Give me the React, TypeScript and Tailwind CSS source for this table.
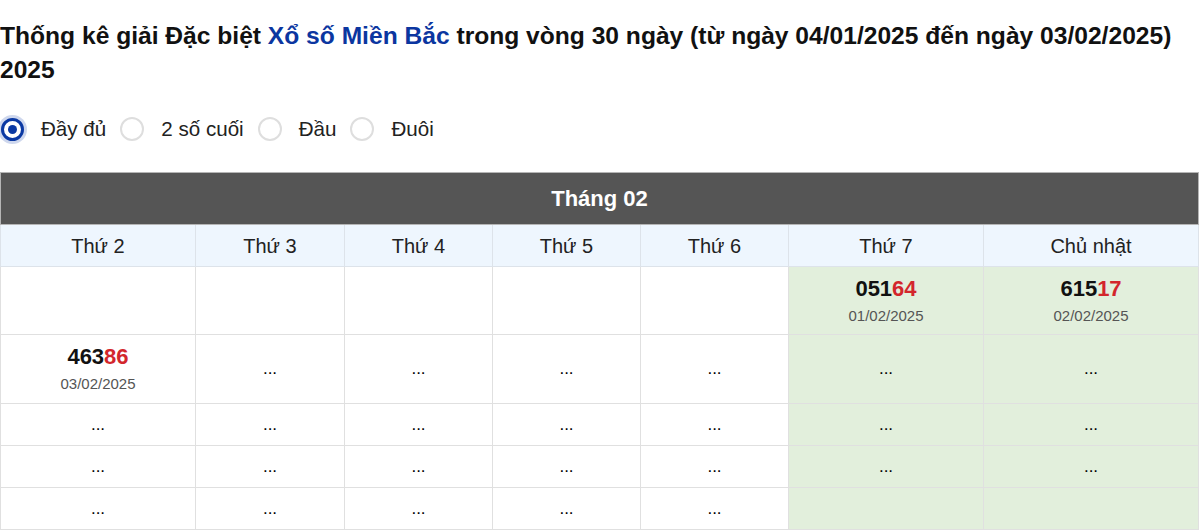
import React from "react";

const font = { fontFamily: '"Liberation Sans", Arial, sans-serif' };

type Cell = { num?: string; date?: string; dots?: boolean };

function Radio({ checked, label }: { checked?: boolean; label: string }) {
  return (
    <label className="flex items-center mr-[14px]">
      {checked ? (
        <span className="w-[23px] h-[23px] rounded-full border-[3px] border-[#0b39a3] bg-white flex items-center justify-center shadow-[0_0_0_3px_rgba(11,57,163,0.2)] ml-[1px]">
          <span className="w-[9px] h-[9px] rounded-full bg-[#0b39a3]" />
        </span>
      ) : (
        <span className="w-[24px] h-[24px] rounded-full border-2 border-[#dedede] bg-white" />
      )}
      <span className="ml-[17px] text-[20.6px] text-[#222]">{label}</span>
    </label>
  );
}

function Num({ num, date }: { num: string; date: string }) {
  return (
    <div className="flex flex-col items-center">
      <div className="text-[22px] font-bold leading-[26px] text-[#111]">
        {num.slice(0, 3)}
        <span className="text-[#d3262c]">{num.slice(3)}</span>
      </div>
      <div className="text-[15px] leading-[20px] mt-[4px] text-[#555]">{date}</div>
    </div>
  );
}

export default function App() {
  const widths = [195, 149, 148, 148, 148, 195, 215];
  const days = ["Thứ 2", "Thứ 3", "Thứ 4", "Thứ 5", "Thứ 6", "Thứ 7", "Chủ nhật"];
  const rows: { h: string; cells: Cell[] }[] = [
    {
      h: "h-[68px]",
      cells: [{}, {}, {}, {}, {}, { num: "05164", date: "01/02/2025" }, { num: "61517", date: "02/02/2025" }],
    },
    {
      h: "h-[69px]",
      cells: [{ num: "46386", date: "03/02/2025" }, { dots: true }, { dots: true }, { dots: true }, { dots: true }, { dots: true }, { dots: true }],
    },
    {
      h: "h-[42px]",
      cells: [{ dots: true }, { dots: true }, { dots: true }, { dots: true }, { dots: true }, { dots: true }, { dots: true }],
    },
    {
      h: "h-[42px]",
      cells: [{ dots: true }, { dots: true }, { dots: true }, { dots: true }, { dots: true }, { dots: true }, { dots: true }],
    },
    {
      h: "h-[42px]",
      cells: [{ dots: true }, { dots: true }, { dots: true }, { dots: true }, { dots: true }, {}, {}],
    },
  ];

  return (
    <div className="w-[1200px] h-[531px] bg-white overflow-hidden" style={font}>
      <h2 className="pt-[19px] text-[24.6px] font-bold leading-[34px] text-[#111]">
        Thống kê giải Đặc biệt <span className="text-[#0b36a0]">Xổ số Miền Bắc</span> trong vòng 30 ngày (từ ngày 04/01/2025 đến ngày 03/02/2025) 2025
      </h2>
      <div className="flex items-center h-[30px] mt-[27px]">
        <Radio checked label="Đầy đủ" />
        <Radio label="2 số cuối" />
        <Radio label="Đầu" />
        <Radio label="Đuôi" />
      </div>
      <table className="mt-[28px] w-[1198px] table-fixed border-collapse">
        <colgroup>
          {widths.map((w, i) => (
            <col key={i} style={{ width: w }} />
          ))}
        </colgroup>
        <thead>
          <tr className="h-[52px]">
            <th colSpan={7} className="bg-[#555555] border border-[#b5b5b5] text-white text-[22px] font-bold">
              Tháng 02
            </th>
          </tr>
          <tr className="h-[42px]">
            {days.map((d) => (
              <th key={d} className="bg-[#eef6fe] border border-[#dde3ea] text-[20px] font-normal text-[#222]">
                {d}
              </th>
            ))}
          </tr>
        </thead>
        <tbody>
          {rows.map((r, ri) => (
            <tr key={ri} className={r.h}>
              {r.cells.map((c, ci) => (
                <td
                  key={ci}
                  className={`border border-[#e0e0e0] text-center align-middle ${ci >= 5 ? "bg-[#e2efdc]" : "bg-white"}`}
                >
                  {c.num ? (
                    <Num num={c.num} date={c.date!} />
                  ) : c.dots ? (
                    <span className="text-[17px] text-black">...</span>
                  ) : null}
                </td>
              ))}
            </tr>
          ))}
        </tbody>
      </table>
    </div>
  );
}
